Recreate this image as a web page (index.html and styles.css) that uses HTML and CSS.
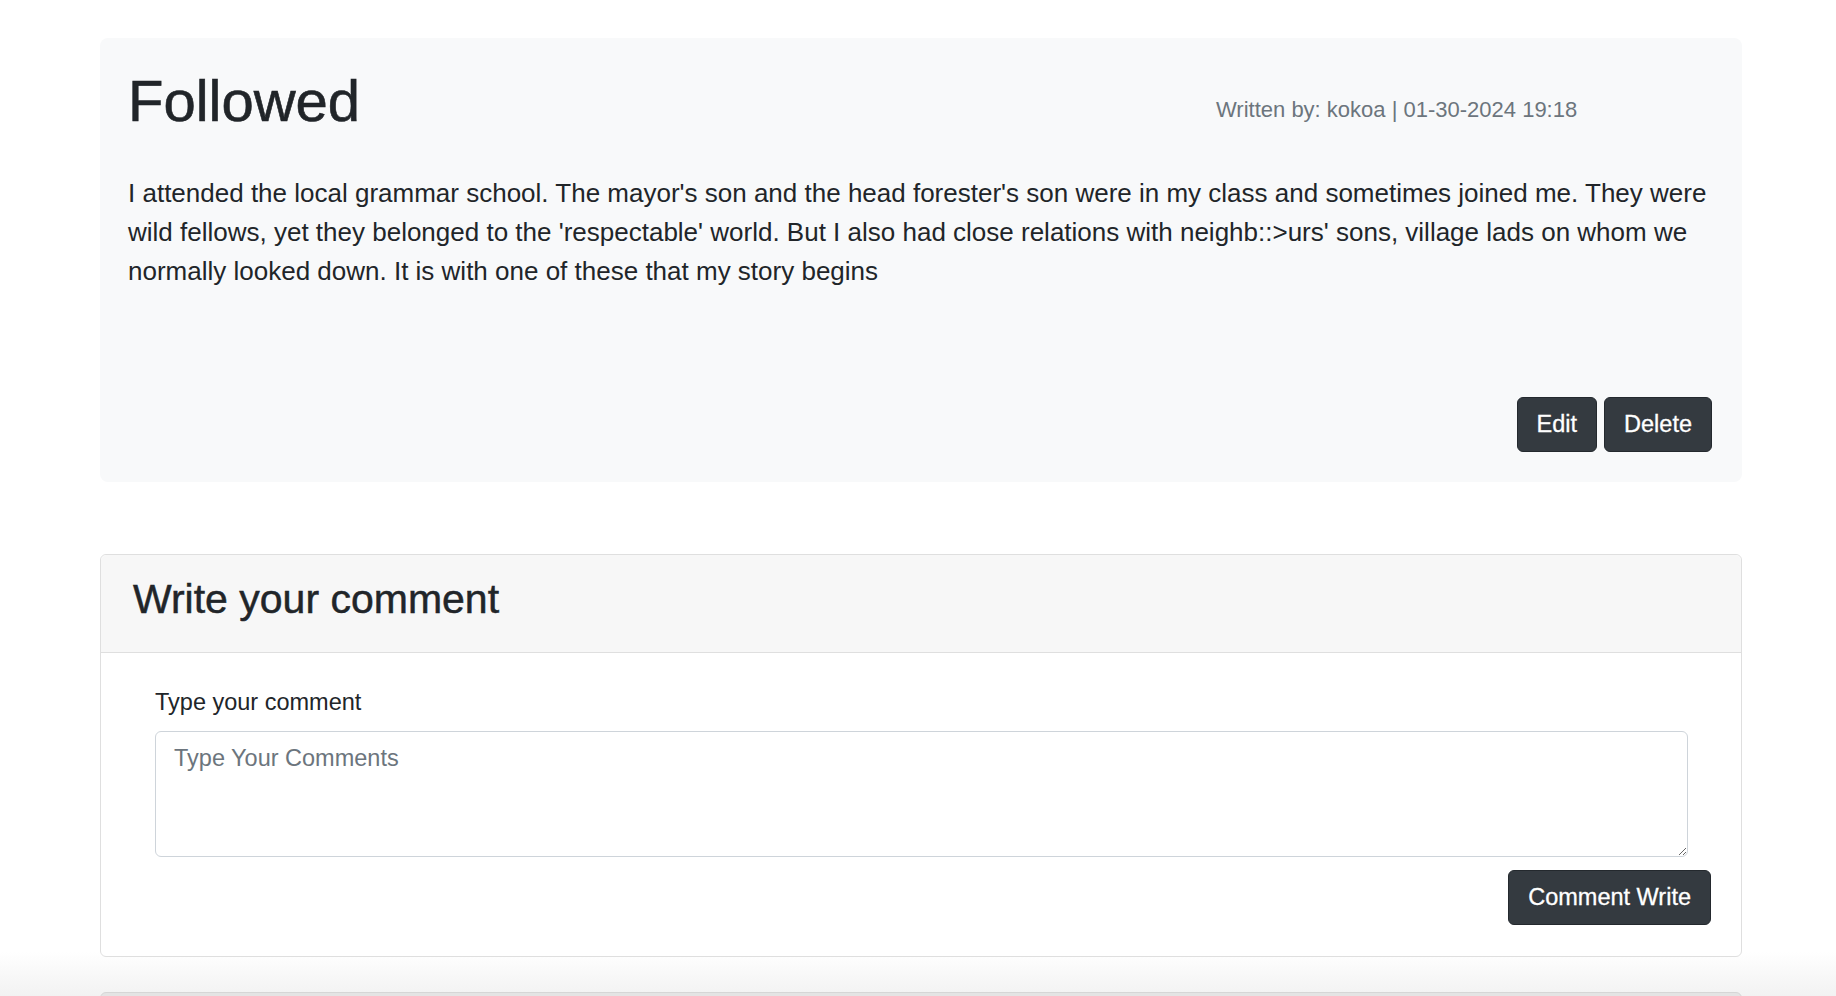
FILE: index.html
```html
<!DOCTYPE html>
<html lang="en">
<head>
<meta charset="utf-8">
<title>Followed</title>
<link rel="stylesheet" href="styles.css">
</head>
<body>
<main class="container">
  <article class="post">
    <header class="post-header">
      <h1 class="post-title">Followed</h1>
      <div class="post-meta">Written by: kokoa | 01-30-2024 19:18</div>
    </header>
    <p class="post-body">I attended the local grammar school. The mayor's son and the head forester's son were in my class and sometimes joined me. They were wild fellows, yet they belonged to the 'respectable' world. But I also had close relations with neighb::&gt;urs' sons, village lads on whom we normally looked down. It is with one of these that my story begins</p>
    <div class="post-actions">
      <button class="btn" type="button">Edit</button>
      <button class="btn" type="button">Delete</button>
    </div>
  </article>

  <section class="card">
    <div class="card-header">
      <h3 class="card-title">Write your comment</h3>
    </div>
    <form class="card-body">
      <div class="form-group">
        <label class="form-label" for="comment">Type your comment</label>
        <textarea class="form-control" id="comment" placeholder="Type Your Comments"></textarea>
      </div>
      <div class="form-actions">
        <button class="btn" type="button">Comment Write</button>
      </div>
    </form>
  </section>

  <section class="card card-next"></section>
</main>
</body>
</html>
```

FILE: styles.css
```css
html {
  overflow: hidden;
  background: linear-gradient(to bottom, #ffffff 0, #ffffff 952px, #f2f2f2 996px) no-repeat;
  background-size: 100% 996px;
  background-color: #f2f2f2;
}

body {
  margin: 0;
  font-family: "Liberation Sans", Arial, Helvetica, sans-serif;
  color: #212529;
}

.container {
  width: 1642px;
  margin-left: 100px;
  padding-top: 38px;
}

.post {
  background: #f8f9fa;
  border-radius: 8px;
  padding: 28px 30px 30px 28px;
}

.post-header {
  display: grid;
  grid-template-columns: 1fr 496px;
  align-items: start;
  margin-bottom: 38px;
}

.post-title {
  margin: 0;
  font-size: 58px;
  font-weight: 500;
  line-height: 1.2;
  -webkit-text-stroke: 0.6px #212529;
}

.post-meta {
  margin-top: 27px;
  font-size: 22px;
  line-height: 33px;
  color: #6c757d;
}

.post-body {
  margin: 0;
  font-size: 26px;
  line-height: 39px;
}

.post-actions {
  display: flex;
  justify-content: flex-end;
  gap: 7px;
  margin-top: 106px;
}

.btn {
  font-family: "Liberation Sans", Arial, Helvetica, sans-serif;
  font-size: 23.5px;
  line-height: 33px;
  height: 55px;
  padding: 10px 19px;
  color: #fff;
  background: #343a40;
  border: 1px solid #24292e;
  border-radius: 6px;
  -webkit-text-stroke: 0.3px #fff;
}

.card {
  margin-top: 72px;
  background: #fff;
  border: 1px solid #dfdfdf;
  border-radius: 6px;
}

.card-header {
  background: #f7f7f7;
  border-bottom: 1px solid #dfdfdf;
  border-radius: 6px 6px 0 0;
  padding: 20px 32px 28px;
}

.card-title {
  margin: 0;
  font-size: 41px;
  font-weight: 500;
  line-height: 1.2;
  -webkit-text-stroke: 0.5px #212529;
}

.card-body {
  display: block;
  margin: 0;
  padding: 32px 30px 31px 31px;
}

.form-group {
  padding: 0 23px;
}

.form-label {
  display: block;
  font-size: 23.5px;
  line-height: 35px;
  margin-bottom: 11px;
}

.form-control {
  display: block;
  box-sizing: border-box;
  width: 100%;
  height: 126px;
  margin: 0;
  padding: 9px 18px;
  font-family: "Liberation Sans", Arial, Helvetica, sans-serif;
  font-size: 23.5px;
  line-height: 35px;
  color: #212529;
  background: #fff;
  border: 1px solid #ced4da;
  border-radius: 6px;
}

.form-control::placeholder {
  color: #6c757d;
}

.form-actions {
  display: flex;
  justify-content: flex-end;
  margin-top: 13px;
}

.card-next {
  margin-top: 35px;
  height: 40px;
  background: #e4e4e4;
  border-color: #d6d6d6;
}
```
